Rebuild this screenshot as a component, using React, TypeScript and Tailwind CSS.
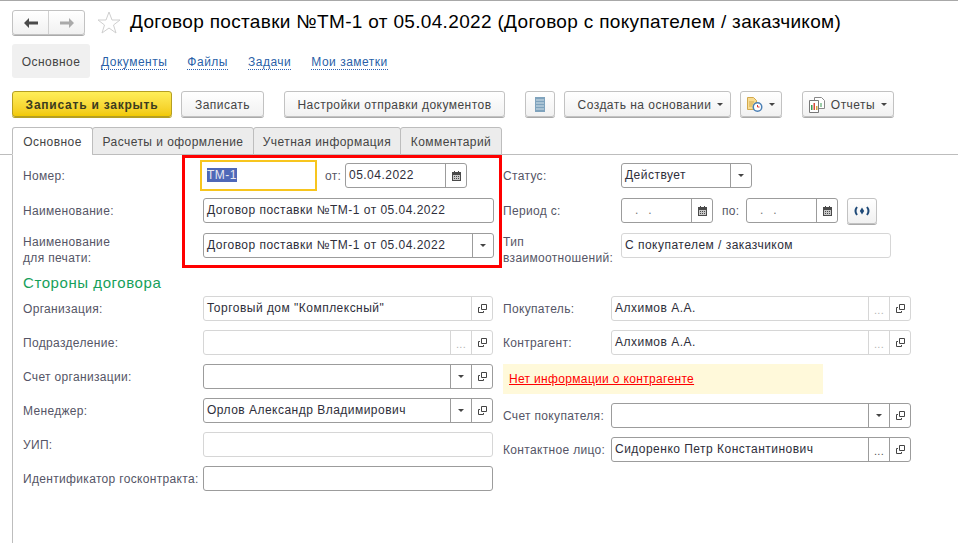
import type { ReactNode } from "react";

const Triangle = () => (
  <svg width="6" height="3" viewBox="0 0 6 3" className="shrink-0">
    <path d="M0 0h6L3 3z" fill="#444" />
  </svg>
);

const CalendarIcon = () => (
  <svg width="9" height="10" viewBox="0 0 9 10">
    <path d="M0 1h9v9H0z" fill="#4a4a4a" />
    <path d="M2 0h1v2H2zM6 0h1v2H6z" fill="#4a4a4a" />
    <path d="M1 4h7v5H1z" fill="#c9c9c9" />
    <path d="M2 5h1v1H2zM4 5h1v1H4zM6 5h1v1H6zM2 7h1v1H2zM4 7h1v1H4zM6 7h1v1H6z" fill="#4a4a4a" />
  </svg>
);

const OpenIcon = () => (
  <svg width="9" height="9" viewBox="0 0 9 9" fill="none" stroke="#444">
    <path d="M3.500.5h5v5h-5z" />
    <path d="M2 3.500H.5v5h5V7" />
  </svg>
);

const Dots = ({ dark }: { dark?: boolean }) => (
  <span className={`mt-[3px] text-[11px] leading-none ${dark ? "text-[#555]" : "text-[#b5b5b5]"}`}>...</span>
);

type FieldBtn = "drop" | "dots" | "dotsDark" | "open" | "calendar";

function Field({
  value,
  width,
  light,
  buttons = [],
}: {
  value?: ReactNode;
  width: string;
  light?: boolean;
  buttons?: FieldBtn[];
}) {
  const line = light ? "border-[#d6d6d6]" : "border-[#9c9c9c]";
  return (
    <div className={`flex h-[25px] shrink-0 rounded-[3px] border bg-white ${line} ${width}`}>
      <div className="flex-1 truncate pl-[3px] leading-[22px] tracking-[0.48px] text-[#2e2e3a]">{value}</div>
      {buttons.map((b, i) => (
        <div key={i} className={`flex w-[21px] shrink-0 items-center justify-center border-l ${line}`}>
          {b === "drop" && <Triangle />}
          {b === "dots" && <Dots />}
          {b === "dotsDark" && <Dots dark />}
          {b === "open" && <OpenIcon />}
          {b === "calendar" && <CalendarIcon />}
        </div>
      ))}
    </div>
  );
}

const Label = ({ children, w }: { children: ReactNode; w: string }) => (
  <div className={`shrink-0 leading-4 text-[#555566] ${w}`}>{children}</div>
);

function Btn({ children, w, primary }: { children: ReactNode; w: string; primary?: boolean }) {
  return (
    <div
      className={`flex h-[26px] shrink-0 items-center justify-center gap-[6px] rounded-[3px] border pt-[1px] ${w} ${
        primary
          ? "border-[#b59f22] bg-gradient-to-b from-[#ffee58] to-[#f2c900] font-bold tracking-[0.77px] text-[#3c3c1e] shadow-[0_1px_0_#b59f22]"
          : "border-[#c2c2c2] bg-gradient-to-b from-white to-[#f1f1f1] tracking-[0.47px] text-[#444] shadow-[0_1px_0_#aaa]"
      }`}
    >
      {children}
    </div>
  );
}

const NavLink = ({ children }: { children: ReactNode }) => (
  <span className="border-b border-dotted border-[#2a5fb0] leading-[14px] tracking-[0.5px] text-[#2a5fa8]">{children}</span>
);

const Tab = ({ children, w, active }: { children: ReactNode; w: string; active?: boolean }) => (
  <div
    className={`flex h-[28px] shrink-0 items-center justify-center rounded-t-[3px] border border-[#bdbdbd] pt-[1px] tracking-[0.45px] text-[#444] ${w} ${
      active ? "border-b-white bg-white" : "-ml-px bg-[#ececec]"
    }`}
  >
    {children}
  </div>
);

export default function App() {
  return (
    <div className="h-[543px] w-[958px] overflow-hidden border-t border-[#a8a8a8] bg-white text-[12px] tracking-[0.33px] [font-family:'Liberation_Sans',Arial,sans-serif]">
      {/* шапка */}
      <div className="flex items-center pl-[12px] pt-[8px]">
        <div className="flex h-[25px] w-[73px] rounded-[3px] border border-[#c2c2c2] bg-gradient-to-b from-white to-[#f1f1f1] shadow-[0_1px_0_#aaa]">
          <div className="flex flex-1 items-center justify-center border-r border-[#d0d0d0]">
            <svg width="14" height="10" viewBox="0 0 14 10"><path d="M0 5l5-5v3.500h9v3H5V10z" fill="#4a4a4a" /></svg>
          </div>
          <div className="flex flex-1 items-center justify-center">
            <svg width="14" height="10" viewBox="0 0 14 10"><path d="M14 5L9 0v3.500H0v3h9V10z" fill="#aaa" /></svg>
          </div>
        </div>
        <svg width="24" height="23" viewBox="0 0 24 23" className="ml-[12px]">
          <path d="M12 1l3 8h8l-6.500 5 2.500 8-7-5-7 5 2.500-8L1 9h8z" fill="#fff" stroke="#cfcfcf" />
        </svg>
        <h1 className="ml-[9px] h-[27px] text-[19px] leading-[25px] tracking-[0.33px] text-black">
          Договор поставки №ТМ-1 от 05.04.2022 (Договор с покупателем / заказчиком)
        </h1>
      </div>

      {/* разделы */}
      <div className="mt-[8px] flex h-[34px] items-center pl-[12px]">
        <div className="flex h-[34px] w-[78px] items-center justify-center rounded-[3px] bg-[#f0f0f0] pt-[1px] tracking-[0.45px] text-[#444]">Основное</div>
        <div className="ml-[11px] flex gap-[20px] pt-[2px]">
          <NavLink>Документы</NavLink>
          <NavLink>Файлы</NavLink>
          <NavLink>Задачи</NavLink>
          <NavLink>Мои заметки</NavLink>
        </div>
      </div>

      {/* кнопки */}
      <div className="mt-[13px] flex pl-[12px]">
        <Btn w="w-[160px]" primary>Записать и закрыть</Btn>
        <div className="ml-[9px]"><Btn w="w-[83px]">Записать</Btn></div>
        <div className="ml-[20px]"><Btn w="w-[221px]">Настройки отправки документов</Btn></div>
        <div className="ml-[20px]">
          <Btn w="w-[30px]">
            <svg width="10" height="15" viewBox="0 0 10 15">
              <path d="M0 0h10v15H0z" fill="#7fa3bd" />
              <path d="M1 3h8M1 6h8M1 9h8M1 12h8" stroke="#d5e2ea" />
            </svg>
          </Btn>
        </div>
        <div className="ml-[9px]"><Btn w="w-[167px] pl-[6px]">Создать на основании <Triangle /></Btn></div>
        <div className="ml-[9px]">
          <Btn w="w-[42px]">
            <svg width="16" height="15" viewBox="0 0 16 15">
              <path d="M.5.5h6l3 3v9h-9z" fill="#f8dc92" stroke="#d3a94c" />
              <path d="M2 5h5M2 7h4M2 9h3" stroke="#d3a94c" />
              <circle cx="10.500" cy="10" r="4.250" fill="#fff" stroke="#4a7fb5" strokeWidth="1.500" />
              <path d="M10.500 8v2h2" stroke="#d33" fill="none" />
            </svg>
            <Triangle />
          </Btn>
        </div>
        <div className="ml-[20px]">
          <Btn w="w-[92px]">
            <svg width="16" height="16" viewBox="0 0 16 16">
              <path d="M5.500.5h7l3 3v8h-10z" fill="#fff" stroke="#888" />
              <path d="M12 6v4" stroke="#3a9a55" />
              <path d="M.5 3.500h9v12h-9z" fill="#fff" stroke="#777" />
              <path d="M2 8h1.500v5H2z" fill="#3a9a55" />
              <path d="M4.500 6h1.500v7H4.500z" fill="#d84a3a" />
              <path d="M7 9h1.500v4H7z" fill="#d8a23a" />
            </svg>
            Отчеты <Triangle />
          </Btn>
        </div>
      </div>

      {/* вкладки */}
      <div className="mt-[10px] flex h-[28px] border-b border-[#bdbdbd] pl-[12px]">
        <Tab w="w-[81px]" active>Основное</Tab>
        <Tab w="w-[162px]">Расчеты и оформление</Tab>
        <Tab w="w-[148px]">Учетная информация</Tab>
        <Tab w="w-[102px]">Комментарий</Tab>
      </div>

      {/* форма */}
      <div className="relative ml-[12px] flex h-[400px] border-l border-[#bdbdbd] pl-[10px] pt-[8px]">
        <div className="pointer-events-none absolute left-[169px] top-0 h-[113px] w-[320px] border-[3px] border-[#ff0000]" />

        <div className="flex w-[480px] shrink-0 flex-col">
          <div className="flex h-[25px] items-center">
            <Label w="w-[177px]">Номер:</Label>
            <div className="h-[31px] w-[117px] shrink-0 border-2 border-[#f7c51e] pl-[5px] pt-[6px] leading-[15px] tracking-[0.48px] text-[#2b2b2b]">
              <span className="bg-[#4f68b8] text-[#e8e8f0]">ТМ-1</span>
            </div>
            <span className="ml-[8px] w-[20px] shrink-0 text-[#555566]">от:</span>
            <Field width="w-[122px]" value="05.04.2022" buttons={["calendar"]} />
          </div>
          <div className="mt-[10px] flex h-[25px] items-center">
            <Label w="w-[180px]">Наименование:</Label>
            <Field width="w-[291px]" value="Договор поставки №ТМ-1 от 05.04.2022" />
          </div>
          <div className="mt-[10px] flex h-[25px] items-start">
            <Label w="w-[180px] pt-[1px]">Наименование<br />для печати:</Label>
            <Field width="w-[291px]" value="Договор поставки №ТМ-1 от 05.04.2022" buttons={["drop"]} />
          </div>
          <div className="flex h-[38px] items-center pt-[13px] text-[15px] tracking-[0.57px] text-[#16a05a]">Стороны договора</div>

          <div className="flex flex-col gap-[9px]">
            {[
              { l: "Организация:", v: 'Торговый дом "Комплексный"', light: true, b: ["open"] as FieldBtn[] },
              { l: "Подразделение:", v: "", light: true, b: ["dots", "open"] as FieldBtn[] },
              { l: "Счет организации:", v: "", b: ["drop", "open"] as FieldBtn[] },
              { l: "Менеджер:", v: "Орлов Александр Владимирович", b: ["drop", "open"] as FieldBtn[] },
              { l: "УИП:", v: "", light: true, b: [] as FieldBtn[] },
              { l: "Идентификатор госконтракта:", v: "", b: [] as FieldBtn[] },
            ].map((r) => (
              <div key={r.l} className="flex h-[25px] items-center">
                <Label w="w-[180px] whitespace-nowrap">{r.l}</Label>
                <Field width="w-[290px]" value={r.v} light={r.light} buttons={r.b} />
              </div>
            ))}
          </div>
        </div>

        <div className="flex flex-col">
          <div className="flex h-[25px] items-center">
            <Label w="w-[118px]">Статус:</Label>
            <Field width="w-[131px]" value="Действует" buttons={["drop"]} />
          </div>
          <div className="mt-[10px] flex h-[25px] items-center">
            <Label w="w-[118px]">Период с:</Label>
            <Field width="w-[92px]" value={<span className="pl-[10px] tracking-[10px] text-[#777]">..</span>} buttons={["calendar"]} />
            <span className="ml-[9px] w-[24px] shrink-0 text-[#555566]">по:</span>
            <Field width="w-[92px]" value={<span className="pl-[10px] tracking-[10px] text-[#777]">..</span>} buttons={["calendar"]} />
            <div className="ml-[9px]">
              <Btn w="w-[30px]">
                <svg width="16" height="10" viewBox="0 0 16 10" fill="none" stroke="#1f4a78" strokeWidth="2">
                  <path d="M3 1Q0 5 3 9M13 1q3 4 0 8" />
                  <path d="M8 1.500l2.200 3.500-2.200 3.500-2.200-3.500z" fill="#1f4a78" stroke="none" />
                </svg>
              </Btn>
            </div>
          </div>
          <div className="mt-[10px] flex h-[25px] items-start">
            <Label w="w-[118px] pt-[1px]">Тип<br />взаимоотношений:</Label>
            <Field width="w-[270px]" light value="С покупателем / заказчиком" />
          </div>
          <div className="h-[38px]" />

          <div className="flex flex-col gap-[9px]">
            <div className="flex h-[25px] items-center">
              <Label w="w-[108px]">Покупатель:</Label>
              <Field width="w-[300px]" light value="Алхимов А.А." buttons={["dots", "open"]} />
            </div>
            <div className="flex h-[25px] items-center">
              <Label w="w-[108px]">Контрагент:</Label>
              <Field width="w-[300px]" light value="Алхимов А.А." buttons={["dots", "open"]} />
            </div>
            <div className="flex h-[30px] w-[320px] items-center bg-[#fff9da] pl-[6px] text-[#ff0000] underline">
              Нет информации о контрагенте
            </div>
            <div className="flex h-[25px] items-center">
              <Label w="w-[108px] whitespace-nowrap">Счет покупателя:</Label>
              <Field width="w-[300px]" buttons={["drop", "open"]} />
            </div>
            <div className="flex h-[25px] items-center">
              <Label w="w-[108px] whitespace-nowrap">Контактное лицо:</Label>
              <Field width="w-[300px]" value="Сидоренко Петр Константинович" buttons={["dotsDark", "open"]} />
            </div>
          </div>
        </div>
      </div>
    </div>
  );
}
